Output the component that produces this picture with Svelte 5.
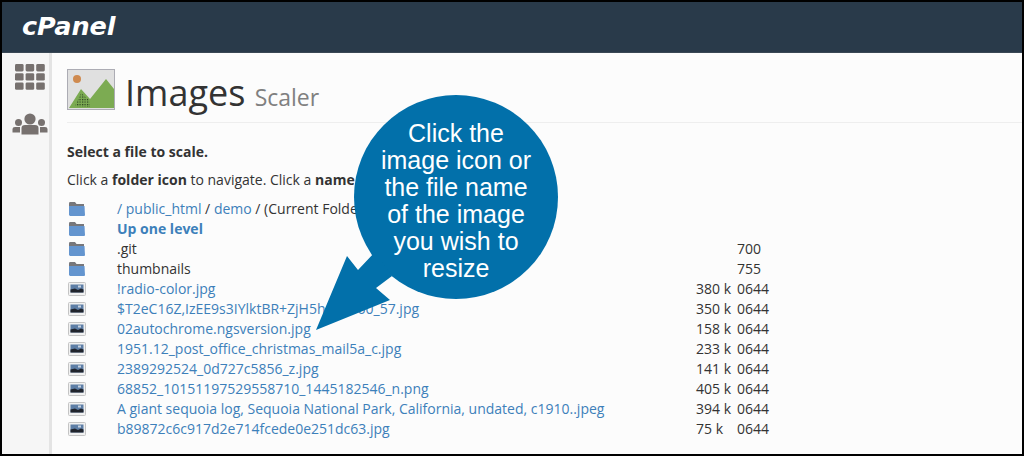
<script>
  const folders = [
    { name: '.git', perms: '700' },
    { name: 'thumbnails', perms: '755' }
  ];
  const files = [
    { name: '!radio-color.jpg', size: '380 k' },
    { name: '$T2eC16Z,IzEE9s3IYlktBR+ZjH5h~~~~60_57.jpg', size: '350 k' },
    { name: '02autochrome.ngsversion.jpg', size: '158 k' },
    { name: '1951.12_post_office_christmas_mail5a_c.jpg', size: '233 k' },
    { name: '2389292524_0d727c5856_z.jpg', size: '141 k' },
    { name: '68852_10151197529558710_1445182546_n.png', size: '405 k' },
    { name: 'A giant sequoia log, Sequoia National Park, California, undated, c1910..jpeg', size: '394 k' },
    { name: 'b89872c6c917d2e714fcede0e251dc63.jpg', size: '75 k' }
  ];
</script>

{#snippet folder()}
  <svg class="ficon" width="18" height="16" viewBox="0 0 18 16">
    <path d="M1 2.5 L1.5 1 H7 L8.5 3 H16 V6 H1 Z" fill="#77777b" />
    <path d="M1 5 H16.5 L17 14.5 L16 15 H2 L1 14 Z" fill="#6495cf" />
  </svg>
{/snippet}

{#snippet thumb()}
  <svg class="ficon" width="18" height="16" viewBox="0 0 18 16">
    <rect x="0.5" y="1.5" width="17" height="13" rx="1" fill="#f1f1f1" stroke="#c4c4c4" />
    <rect x="2.500" y="3.500" width="13" height="8" fill="#5d7ea6" />
    <path d="M2.500 11.500 L2.500 8.500 L7 7.500 L10 9 L13 7.500 L15.500 8.500 V11.500 Z" fill="#20242c" />
    <rect x="10" y="4.500" width="3" height="2" fill="#c9d4e2" />
  </svg>
{/snippet}

<div class="page">
  <header class="topbar">
    <span class="logo">cPanel</span>
  </header>

  <div class="layout">
    <nav class="side">
      <svg width="30" height="26" viewBox="0 0 30 26">
        {#each [0, 1, 2] as r}
          {#each [0, 1, 2] as c}
            <rect x={c * 10.6} y={r * 9.2} width="8.6" height="7.4" rx="1.4" fill="#77716f" />
          {/each}
        {/each}
      </svg>
      <svg width="36" height="22" viewBox="0 0 36 22">
        <g fill="#77716f">
          <circle cx="18" cy="6" r="5.6" />
          <path d="M9.500 21.500 V15 Q9.500 12 13 12 H23 Q26.500 12 26.500 15 V21.500 Z" />
          <circle cx="6.500" cy="9.500" r="3.500" />
          <path d="M0.500 19.500 V16 Q0.500 14 3 14 H8 V19.500 Z" />
          <circle cx="29.500" cy="9.500" r="3.500" />
          <path d="M28 14 H33 Q35.500 14 35.500 16 V19.500 H28 Z" />
        </g>
      </svg>
    </nav>

    <main class="content">
      <div class="title">
        <svg width="48" height="41" viewBox="0 0 48 41">
          <defs>
            <pattern id="dots" width="2.500" height="2.500" patternUnits="userSpaceOnUse">
              <rect width="1.200" height="1.200" fill="#2b4020" />
            </pattern>
          </defs>
          <rect x="0.500" y="0.500" width="47" height="40" fill="#e0e0e0" stroke="#acacb4" />
          <circle cx="10" cy="10" r="4" fill="#cf8a4f" />
          <path d="M2 39 L14 20 L23 30 L39 10 L47 20 V39 Z" fill="#7cab52" />
          <path d="M8 37 L14 24 L22 31 L23 38 Z" fill="url(#dots)" />
        </svg>
        <h1>Images <small>Scaler</small></h1>
      </div>

      <p class="lead"><b>Select a file to scale.</b></p>
      <p class="hint">Click a <b>folder icon</b> to navigate. Click a <b>name</b> or icon to select a file.</p>

      <div class="rows">
        <div class="row">
          {@render folder()}
          <span><a href="#top">/ public_html</a> / <a href="#top">demo</a> / (Current Folder)</span>
          <span></span><span></span>
        </div>
        <div class="row">
          {@render folder()}
          <a href="#top"><b>Up one level</b></a>
          <span></span><span></span>
        </div>
        {#each folders as f}
          <div class="row">
            {@render folder()}
            <span>{f.name}</span>
            <span></span>
            <span>{f.perms}</span>
          </div>
        {/each}
        {#each files as f}
          <div class="row">
            {@render thumb()}
            <a href="#top">{f.name}</a>
            <span>{f.size}</span>
            <span>0644</span>
          </div>
        {/each}
      </div>
    </main>
  </div>

  <svg class="pointer" width="250" height="240" viewBox="0 0 250 240">
    <circle cx="142" cy="103" r="102" fill="#0270aa" />
    <polygon points="2,236 33,162 44,176 61,158 78,182 62,194 76,206" fill="#0270aa" />
  </svg>
  <div class="callout">Click the<br />image icon or<br />the file name<br />of the image<br />you wish to<br />resize</div>
</div>

<style>
  :global(body) {
    margin: 0;
  }

  .page {
    position: relative;
    box-sizing: border-box;
    width: 1024px;
    height: 456px;
    border: 2px solid #000;
    display: flex;
    flex-direction: column;
    overflow: hidden;
    background: #fcfcfc;
    font-family: 'Open Sans', sans-serif;
    font-size: 14px;
    color: #333;
  }

  .topbar {
    height: 51px;
    flex: none;
    background: #293a4a;
    display: flex;
    align-items: center;
    padding-left: 20px;
    box-sizing: border-box;
    border-bottom: 1px solid #3a4855;
  }

  .logo {
    font-family: 'DejaVu Sans', sans-serif;
    font-weight: bold;
    font-style: italic;
    font-size: 25.5px;
    color: #fff;
    margin-top: -2px;
  }

  .layout {
    flex: 1;
    display: flex;
    min-height: 0;
  }

  .side {
    width: 50px;
    flex: none;
    box-sizing: border-box;
    background: #f6f6f6;
    border-right: 3px solid #e4e4e4;
    display: flex;
    flex-direction: column;
    align-items: center;
    gap: 23px;
    padding: 11px 0 0 8px;
  }

  .content {
    flex: 1;
    padding: 16px 0 0 15px;
  }

  .title {
    display: flex;
    align-items: flex-start;
    gap: 10px;
    height: 53px;
    border-bottom: 1px solid #eee;
  }

  h1 {
    margin: -1px 0 0;
    font-weight: 400;
    font-size: 36px;
    line-height: 50px;
    color: #333;
  }

  small {
    font-size: 23px;
    color: #808080;
  }

  p {
    margin: 0;
    line-height: 20px;
  }

  .lead {
    margin-top: 19px;
  }

  .hint {
    margin-top: 8px;
    margin-bottom: 9px;
  }

  .row {
    display: grid;
    grid-template-columns: 50px 579px 41px 60px;
    height: 20px;
    line-height: 20px;
    align-items: center;
    white-space: nowrap;
  }

  .ficon {
    display: block;
    margin-left: 1px;
  }

  a {
    color: #3d80ba;
    text-decoration: none;
  }

  .pointer {
    position: absolute;
    left: 312px;
    top: 92px;
  }

  .callout {
    position: absolute;
    left: 349px;
    top: 118px;
    width: 210px;
    text-align: center;
    font-family: 'Liberation Sans', sans-serif;
    font-size: 25px;
    line-height: 27px;
    color: #fff;
  }
</style>
